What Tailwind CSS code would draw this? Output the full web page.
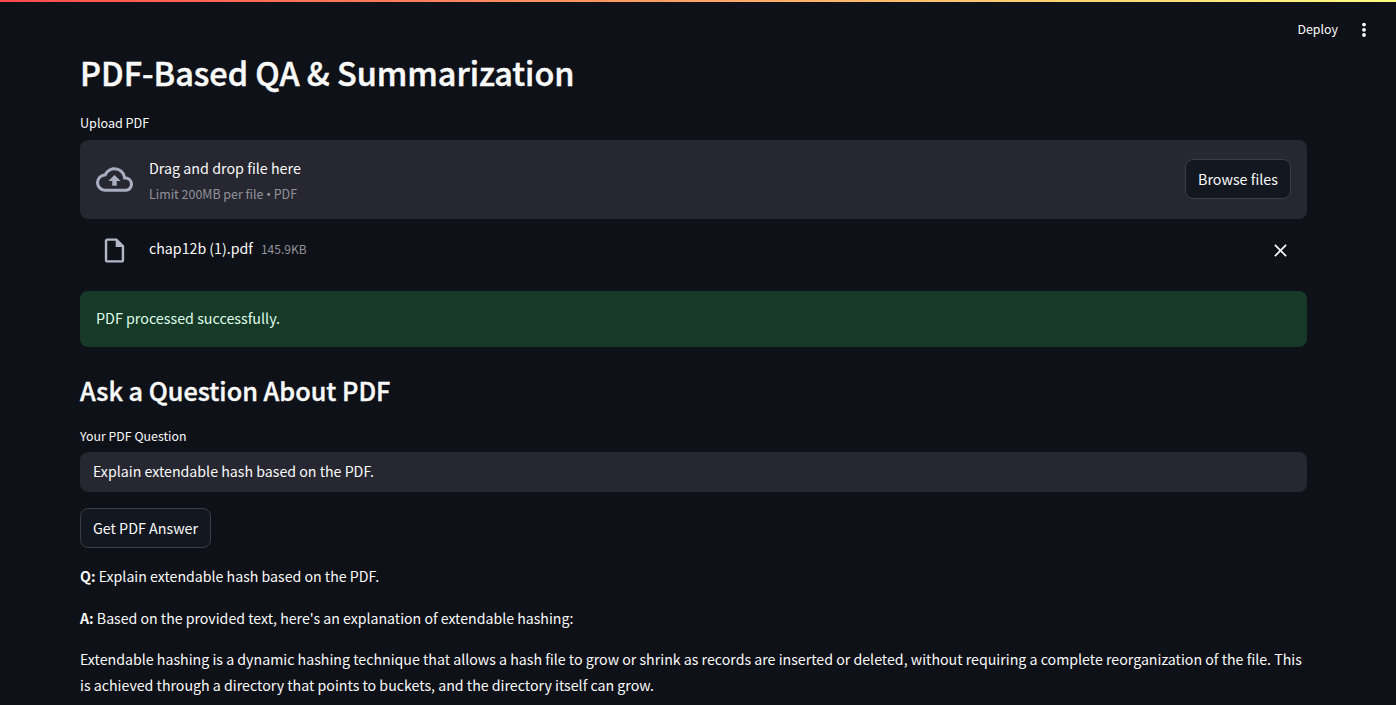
<!DOCTYPE html>
<html lang="en">
<head>
<meta charset="utf-8">
<title>PDF-Based QA &amp; Summarization</title>
<script src="https://cdn.jsdelivr.net/npm/@tailwindcss/browser@4"></script>
</head>
<body class="relative h-[705px] overflow-hidden bg-[#0e1117] font-['Noto_Sans_CJK_SC','Noto_Sans',sans-serif] text-[14.2px] leading-[26px] text-[#fafafa]">
  <div class="h-[2px] bg-[linear-gradient(90deg,#ff4b4b,#fffd80)]"></div>

  <header class="absolute right-[22px] top-[15px] flex h-[30px] items-center gap-[16px]">
    <span class="-mt-[3px] text-[12.4px] leading-5">Deploy</span>
    <svg class="h-5 w-5" viewBox="0 0 20 20" fill="currentColor"><circle cx="10" cy="4.6" r="1.9"/><circle cx="10" cy="9.8" r="1.9"/><circle cx="10" cy="15" r="1.9"/></svg>
  </header>

  <main class="ml-[80px] w-[1226.5px] pt-[48px]">
    <h1 class="h-[44px] whitespace-nowrap text-[32.4px] font-medium leading-[44px] [-webkit-text-stroke:0.5px]">PDF-Based QA &amp; Summarization</h1>

    <div class="mt-[18px] text-[12.6px] leading-[22px]">Upload PDF</div>
    <section class="mt-[5.5px] flex h-[79px] items-center rounded-lg bg-[#262730] px-4">
      <svg class="h-[37px] w-[37px] text-[#a8adc0]" viewBox="0 0 24 24" fill="currentColor"><path d="M19.35 10.04A7.49 7.49 0 0 0 12 4C9.11 4 6.6 5.64 5.35 8.04A5.994 5.994 0 0 0 0 14c0 3.31 2.69 6 6 6h13c2.76 0 5-2.24 5-5 0-2.64-2.05-4.78-4.65-4.96zM19 18H6c-2.21 0-4-1.79-4-4 0-2.05 1.53-3.76 3.56-3.97l1.07-.11.5-.95A5.469 5.469 0 0 1 12 6c2.62 0 4.88 1.86 5.39 4.43l.3 1.5 1.53.11A2.98 2.98 0 0 1 22 15c0 1.65-1.35 3-3 3zM8 13h2.55v3h2.9v-3H16l-4-4z"/></svg>
      <div class="ml-[16px] flex flex-col pt-[4px]">
        <span class="text-[14.3px]">Drag and drop file here</span>
        <span class="text-[12.45px] leading-[26px] text-[#92939b]">Limit 200MB per file <span class="font-['Noto_Sans']">•</span> PDF</span>
      </div>
      <button class="ml-auto h-10 w-[106px] whitespace-nowrap rounded-lg border border-[#3c3d46] bg-[#131720] pl-px text-[14.3px]">Browse files</button>
    </section>

    <div class="flex h-[72.5px] items-start pl-[20px] pr-[20px] pt-[16.5px]">
      <svg class="mt-[1px] h-[29px] w-[29px] text-[#b3b8c9]" viewBox="0 0 24 24" fill="currentColor"><path d="M14 2H6c-1.1 0-2 .9-2 2v16c0 1.1.9 2 2 2h12c1.1 0 2-.9 2-2V8l-6-6zM6 20V4h7v5h5v11H6z"/></svg>
      <span class="ml-[20px]">chap12b (1).pdf</span>
      <span class="ml-[8px] mt-[1px] text-[12px] text-[#92939b]">145.9KB</span>
      <svg class="ml-auto mt-[9px] h-[13px] w-[13px]" viewBox="0 0 13 13" fill="none" stroke="currentColor" stroke-width="1.7"><path d="M.9.9l11.2 11.2M12.1.9L.9 12.1"/></svg>
    </div>

    <div class="flex h-[56px] items-center rounded-lg bg-[#173928] px-4 pb-[2px] text-[14.3px] text-[#dffde9]">PDF processed successfully.</div>

    <h2 class="mt-[23px] h-[40px] whitespace-nowrap text-[25.25px] font-medium leading-[40px] [-webkit-text-stroke:0.4px]">Ask a Question About PDF</h2>
    <div class="mt-[15px] text-[12.35px] leading-[22px]">Your PDF Question</div>
    <div class="mt-[5px] flex h-[40px] items-center rounded-lg bg-[#262730] px-[13px] pb-[2px]">Explain extendable hash based on the PDF.</div>
    <button class="mt-[16px] block h-[40px] w-[131px] whitespace-nowrap rounded-lg border border-[#3c3d46] bg-[#131720] text-[14.3px]">Get PDF Answer</button>

    <p class="mt-[15px] text-[14.17px]"><b class="font-bold">Q:</b> Explain extendable hash based on the PDF.</p>
    <p class="mt-[15.5px] text-[14.15px]"><b class="font-bold">A:</b> Based on the provided text, here's an explanation of extendable hashing:</p>
    <p class="mt-[15.5px] whitespace-nowrap">Extendable hashing is a dynamic hashing technique that allows a hash file to grow or shrink as records are inserted or deleted, without requiring a complete reorganization of the file. This<br>is achieved through a directory that points to buckets, and the directory itself can grow.</p>
  </main>
</body>
</html>
